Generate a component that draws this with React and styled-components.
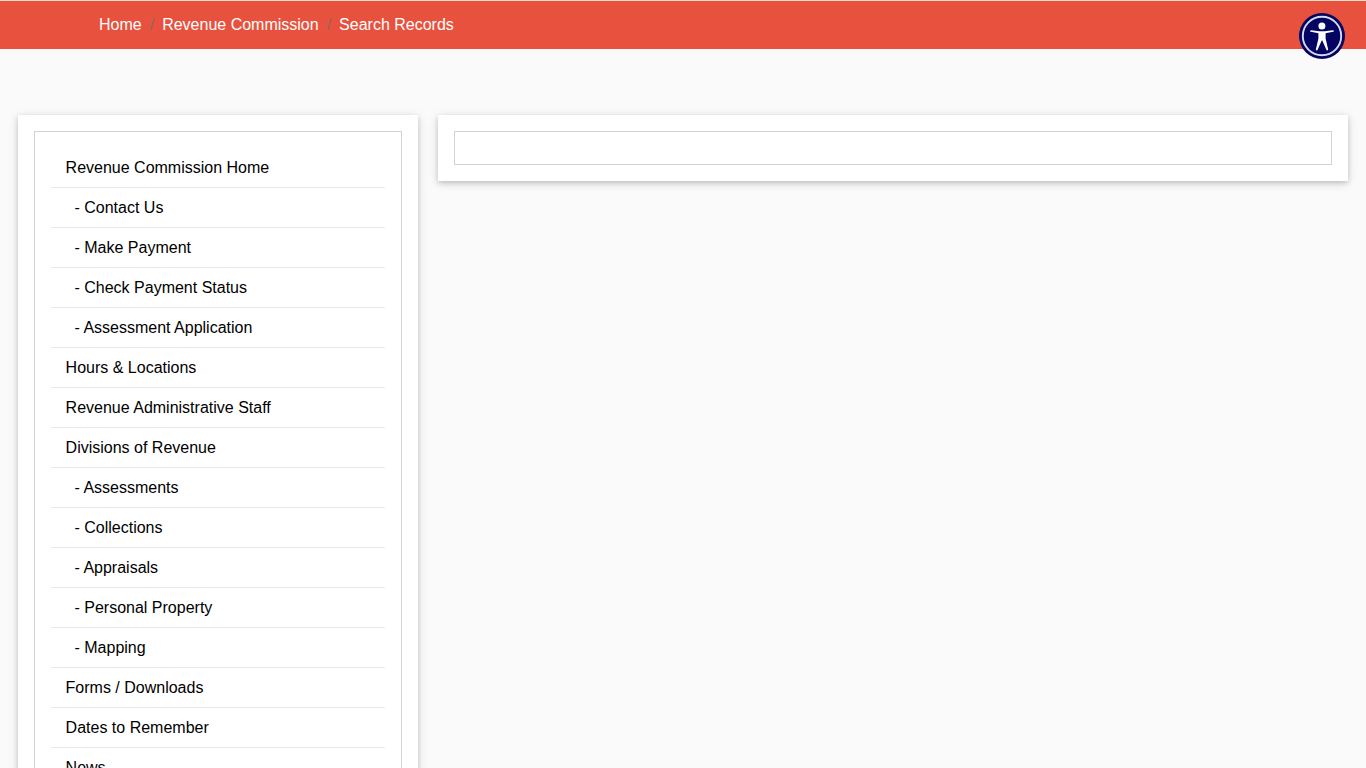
import React from 'react';
import styled, { createGlobalStyle } from 'styled-components';

const GlobalStyle = createGlobalStyle`
    *, *::before, *::after {
        box-sizing: border-box;
    }

    body {
        margin: 0;
        height: 100vh;
        overflow: hidden;
        background: #fafafa;
        color: #000;
        font-family: "Liberation Sans", Arial, sans-serif;
        font-size: 16px;
        line-height: 24px;
    }
`;

const Breadcrumb = styled.nav`
    height: 49px;
    padding: 12px 99px 11px;
    border-top: 1px solid #f5ddc8;
    background: #e7513d;
`;

const Crumbs = styled.ol`
    display: flex;
    margin: 0;
    padding: 0;
    list-style: none;
`;

const Crumb = styled.li`
    & + &::before {
        content: "/";
        padding: 0 8px;
        color: #8a6a62;
    }
`;

const CrumbLink = styled.a`
    color: #fff;
    text-decoration: none;
`;

const Layout = styled.main`
    display: grid;
    grid-template-columns: 400px 1fr;
    align-items: start;
    gap: 20px;
    padding: 66px 18px 40px;
`;

const Card = styled.section`
    padding: 16px;
    background: #fff;
    box-shadow: 0 2px 5px 0 rgba(0, 0, 0, 0.16), 0 2px 10px 0 rgba(0, 0, 0, 0.12);
`;

const CardBody = styled.div`
    padding: 16px;
    border: 1px solid #d3d3d3;
`;

const Menu = styled.ul`
    margin: 0;
    padding: 0;
    list-style: none;
`;

const MenuItem = styled.li`
    height: 40px;
    padding: 8px 14.6px 7px;
    border-bottom: 1px solid #e9e9e9;
`;

const MenuLink = styled.a`
    color: #000;
    text-decoration: none;
    white-space: pre;
`;

const AccessibilityButton = styled.button`
    position: fixed;
    top: 13px;
    right: 21px;
    width: 46px;
    height: 46px;
    padding: 0;
    border: none;
    border-radius: 50%;
    background: none;
    cursor: pointer;

    svg {
        display: block;
    }
`;

const crumbs = ['Home', 'Revenue Commission', 'Search Records'];

const menu = [
    { label: 'Revenue Commission Home' },
    { label: 'Contact Us', sub: true },
    { label: 'Make Payment', sub: true },
    { label: 'Check Payment Status', sub: true },
    { label: 'Assessment Application', sub: true },
    { label: 'Hours & Locations' },
    { label: 'Revenue Administrative Staff' },
    { label: 'Divisions of Revenue' },
    { label: 'Assessments', sub: true },
    { label: 'Collections', sub: true },
    { label: 'Appraisals', sub: true },
    { label: 'Personal Property', sub: true },
    { label: 'Mapping', sub: true },
    { label: 'Forms / Downloads' },
    { label: 'Dates to Remember' },
    { label: 'News' },
];

const AccessibilityIcon = () => (
    <svg width="46" height="46" viewBox="0 0 46 46" aria-hidden="true">
        <circle cx="23" cy="23" r="23" fill="#040463" />
        <circle cx="23" cy="23" r="19.2" fill="none" stroke="#d5daf5" strokeWidth="1.9" />
        <circle cx="22.9" cy="12.9" r="3.5" fill="#fff" />
        <path
            d="M12.1 17.2 20.4 18.3h5.2l8.3-1.1a.8.8 0 0 1 .2 1.6l-7.5 1.5v5.2l2.5 10.7a.9.9 0 0 1-1.7.6L23.3 27.6h-.6l-4.1 9.2a.9.9 0 0 1-1.7-.6l2.5-10.7v-5.2L11.9 18.8a.8.8 0 0 1 .2-1.6Z"
            fill="#fff"
        />
    </svg>
);

const App = () => {
    return (
        <>
            <GlobalStyle />
            <Breadcrumb aria-label="Breadcrumb">
                <Crumbs>
                    {crumbs.map((name) => (
                        <Crumb key={name}>
                            <CrumbLink href="#">{name}</CrumbLink>
                        </Crumb>
                    ))}
                </Crumbs>
            </Breadcrumb>
            <Layout>
                <Card>
                    <CardBody>
                        <Menu>
                            {menu.map(({ label, sub }) => (
                                <MenuItem key={label}>
                                    <MenuLink href="#">{sub ? `\u00a0\u00a0- ${label}` : label}</MenuLink>
                                </MenuItem>
                            ))}
                        </Menu>
                    </CardBody>
                </Card>
                <Card>
                    <CardBody />
                </Card>
            </Layout>
            <AccessibilityButton aria-label="Accessibility options">
                <AccessibilityIcon />
            </AccessibilityButton>
        </>
    );
};

export default App;
